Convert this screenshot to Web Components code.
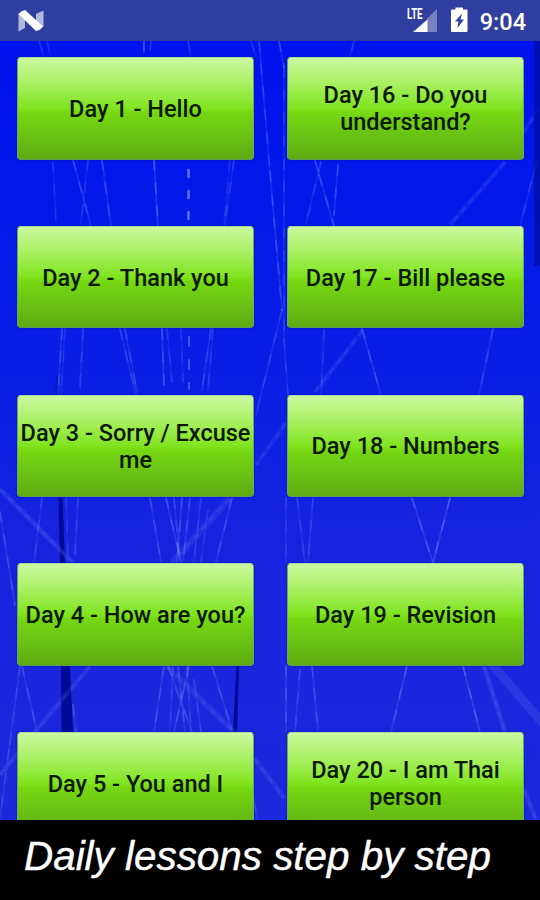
<!DOCTYPE html>
<html lang="en">
<head>
<meta charset="utf-8">
<title>Daily lessons</title>
<style>
  body {
    margin: 0;
    width: 540px;
    height: 900px;
    overflow: hidden;
    background: #000;
    font-family: Roboto, "Noto Sans", sans-serif;
  }
</style>
</head>
<body>
<lesson-app>
  <status-bar slot="status">9:04</status-bar>
  <lesson-button>Day 1 - Hello</lesson-button>
  <lesson-button>Day 16 - Do you understand?</lesson-button>
  <lesson-button>Day 2 - Thank you</lesson-button>
  <lesson-button>Day 17 - Bill please</lesson-button>
  <lesson-button>Day 3 - Sorry / Excuse me</lesson-button>
  <lesson-button>Day 18 - Numbers</lesson-button>
  <lesson-button>Day 4 - How are you?</lesson-button>
  <lesson-button>Day 19 - Revision</lesson-button>
  <lesson-button>Day 5 - You and I</lesson-button>
  <lesson-button>Day 20 - I am Thai person</lesson-button>
  <page-caption slot="caption">Daily lessons step by step</page-caption>
</lesson-app>

<script>
class StatusBar extends HTMLElement {
  constructor() {
    super();
    this.attachShadow({ mode: 'open' });
  }

  connectedCallback() {
    this.shadowRoot.innerHTML = `
      <style>
        :host {
          display: flex;
          align-items: center;
          height: 41px;
          box-sizing: border-box;
          padding: 0 14px 0 17px;
          background: #303f9f;
          color: #fff;
        }
        svg {
          display: block;
        }
        .spacer {
          flex: 1;
        }
        .signal {
          margin-right: 14px;
        }
        .battery {
          margin-right: 12px;
        }
        .time {
          font-size: 23.5px;
          font-weight: 500;
          line-height: 28px;
          padding-top: 3px;
        }
      </style>
      <svg width="28" height="41" viewBox="0 0 28 41">
        <path d="M1.500 13 8 18v10L1.500 31.500zM19 14l7.500-3.500V27L19 24z" fill="#b2b9dd"/>
        <path d="M1.500 14Q4 11 8 10L26 26.500Q23 30.500 19 31z" fill="#fff"/>
      </svg>
      <div class="spacer"></div>
      <svg class="signal" width="31" height="41" viewBox="406 0 31 41">
        <path d="M437 9v23h-10V18.500z" fill="#7781be"/>
        <path d="M427.500 19.500V32h-14.500z" fill="#fff"/>
        <text x="407" y="19" font-size="14.500" font-weight="700" textLength="15.500" lengthAdjust="spacingAndGlyphs" fill="#fff">LTE</text>
      </svg>
      <svg class="battery" width="17" height="41" viewBox="451 0 17 41">
        <path d="M451 10.500q0-1 1-1h3.500V7.500h7.500v2h3.500q1 0 1 1v20.500q0 1-1 1H452q-1 0-1-1z" fill="#fff"/>
        <path d="M462 13.500 455 21.500h3.500l-1 6.500 6.500-8.500h-3.500z" fill="#303f9f"/>
      </svg>
      <div class="time"><slot></slot></div>
    `;
  }
}

class StringBackdrop extends HTMLElement {
  constructor() {
    super();
    this.attachShadow({ mode: 'open' });
    // x1, y1, x2, y2, opacity
    this.threads = [
      [39, 41, 44, 57, .25], [47, 41, 50, 55, .2], [144, 41, 144, 52, .5], [151, 41, 150, 50, .3],
      [188, 41, 191, 57, .28], [251, 41, 256, 57, .25], [259, 41, 270, 172, .35],
      [279, 41, 284, 67, .4], [284, 67, 284, 340, .3], [354, 41, 350, 57, .3],
      [53, 162, 56, 222, .23], [73, 160, 91, 226, .38], [88, 160, 81, 224, .25],
      [102, 160, 111, 226, .4], [154, 160, 158, 226, .5], [230, 160, 224, 226, .22],
      [234, 160, 225, 224, .3], [270, 172, 282, 310, .4],
      [315, 160, 319, 175, .35], [321, 162, 306, 224, .3], [319, 175, 334, 226, .4],
      [338, 165, 334, 215, .38], [537, 160, 520, 226, .32],
      [62, 329, 58, 395, .38], [65, 329, 61, 395, .22], [83, 329, 80, 388, .3],
      [120, 329, 136, 395, .32], [125, 329, 137, 392, .35], [162, 329, 164, 385, .42],
      [167, 329, 172, 382, .25], [181, 329, 183, 382, .22],
      [211, 329, 202, 390, .32], [213, 329, 208, 390, .25], [282, 310, 256, 415, .3],
      [284, 340, 288, 395, .25], [324, 330, 321, 395, .24],
      [362, 329, 381, 395, .4], [493, 329, 479, 395, .32],
      [42, 498, 34, 563, .28], [0, 512, 15, 605, .35], [66, 498, 68, 555, .2],
      [78, 498, 75, 555, .3], [150, 498, 161, 562, .35], [166, 498, 181, 562, .4],
      [174, 498, 180, 562, .3], [182, 498, 177, 562, .4], [190, 498, 183, 562, .35],
      [201, 498, 194, 562, .25], [208, 510, 201, 562, .2],
      [232, 498, 216, 562, .36], [286, 498, 286, 563, .24],
      [297, 498, 305, 563, .26], [313, 498, 308, 563, .3],
      [412, 498, 433, 563, .45], [450, 498, 433, 563, .52],
      [20, 666, 9, 750, .3], [9, 750, 0, 818, .28], [22, 666, 37, 732, .34],
      [164, 666, 154, 732, .38], [168, 666, 192, 732, .35], [173, 666, 170, 732, .25],
      [189, 666, 174, 732, .4], [178, 666, 185, 732, .35], [187, 666, 191, 732, .26],
      [194, 680, 201, 732, .28], [212, 666, 232, 730, .38], [73, 705, 76, 732, .34],
      [286, 666, 286, 732, .38], [300, 670, 295, 732, .3], [312, 666, 318, 730, .35],
      [407, 666, 391, 732, .42], [463, 666, 480, 732, .48], [254, 800, 257, 819, .3]
    ];
    // wider, fainter bands of the same strings
    this.bands = [
      [505, 162, 450, 225, 5, .09], [363, 330, 315, 392, 5, .09],
      [286, 423, 256, 465, 5, .08], [0, 489, 73, 563, 5, .13],
      [230, 498, 172, 563, 7, .1], [90, 666, 35, 732, 5, .1],
      [35, 732, 0, 775, 5, .1], [167, 666, 238, 736, 6, .1],
      [254, 758, 284, 798, 5, .1], [484, 666, 505, 732, 5, .14],
      [490, 662, 545, 726, 9, .14], [524, 790, 536, 820, 5, .12],
      [539, 108, 522, 135, 5, .08]
    ];
  }

  connectedCallback() {
    const bands = this.bands.map(([x1, y1, x2, y2, w, o]) => `
      <line x1="${x1}" y1="${y1}" x2="${x2}" y2="${y2}" stroke-width="${w}" opacity="${o}"/>
      <line x1="${x1}" y1="${y1}" x2="${x2}" y2="${y2}" stroke-width="2" stroke-dasharray="7 5" opacity="${w > 8 ? 0 : .13}"/>
    `).join('');
    const threads = this.threads.map(([x1, y1, x2, y2, o]) => `
      <line x1="${x1}" y1="${y1}" x2="${x2}" y2="${y2}" stroke-width="1.8" opacity="${o * .38}"/>
      <line x1="${x1}" y1="${y1}" x2="${x2}" y2="${y2}" stroke-width="1.8" stroke-dasharray="10 13" opacity="${o * .5}"/>
    `).join('');

    this.shadowRoot.innerHTML = `
      <style>
        :host {
          display: block;
          background: linear-gradient(#0012ee, #0319e8 22%, #0a1fe4 45%, #1624df 65%, #1b29dc);
        }
        svg {
          display: block;
        }
      </style>
      <svg width="540" height="779" viewBox="0 41 540 779">
        <g fill="#000a94">
          <path d="M58.500 498h4L65 563h-5z"/>
          <path d="M61 666h9l3 67H61.500z"/>
          <path d="M236.500 666h2.500l-2 67h-4z"/>
          <path d="M56 375h3v20h-4z" opacity=".3"/>
        </g>
        <g stroke="#8fa0ff">${bands}</g>
        <g stroke="#98adff" stroke-linecap="round">
          ${threads}
          <path d="M188.500 162v64" stroke-width="2.600" stroke-dasharray="7 14" stroke-dashoffset="-8" opacity=".6"/>
          <path d="M189 329v60" stroke-width="2" stroke-dasharray="9 14" stroke-dashoffset="-8" opacity=".38"/>
        </g>
        <rect x="534" y="41" width="6" height="225" fill="#000e9e" opacity=".75"/>
      </svg>
    `;
  }
}

class LessonButton extends HTMLElement {
  constructor() {
    super();
    this.attachShadow({ mode: 'open' });
  }

  connectedCallback() {
    this.shadowRoot.innerHTML = `
      <style>
        :host {
          display: block;
          height: 102.5px;
        }
        button {
          display: flex;
          align-items: center;
          justify-content: center;
          width: 100%;
          height: 100%;
          box-sizing: border-box;
          margin: 0;
          padding: 2px 1px 0 1px;
          border: 1px solid;
          border-color: #a6dba0 #6aa86a #5b9a58 #6aa86a;
          border-radius: 4px;
          background: linear-gradient(#cbf8a0, #a9f062 25%, #80e41f 50%, #76d813 54%, #6bc414 75%, #5eaa12);
          box-shadow: 0 0 2px #0010a8;
          color: #0b1800;
          font: 500 23.5px/27px Roboto, "Noto Sans", sans-serif;
          text-align: center;
        }
      </style>
      <button type="button"><span><slot></slot></span></button>
    `;
  }
}

class PageCaption extends HTMLElement {
  constructor() {
    super();
    this.attachShadow({ mode: 'open' });
  }

  connectedCallback() {
    this.shadowRoot.innerHTML = `
      <style>
        :host {
          display: block;
          height: 80px;
          box-sizing: border-box;
          padding: 13px 0 0 24px;
          background: #000;
          color: #fff;
          font: italic 40.4px/46px "Liberation Sans", Arial, sans-serif;
          -webkit-text-stroke: .4px #fff;
          white-space: nowrap;
        }
      </style>
      <slot></slot>
    `;
  }
}

class LessonApp extends HTMLElement {
  constructor() {
    super();
    this.attachShadow({ mode: 'open' });
  }

  connectedCallback() {
    this.shadowRoot.innerHTML = `
      <style>
        :host {
          display: grid;
          grid-template-rows: 41px 779px 80px;
          width: 540px;
          height: 900px;
        }
        main {
          display: grid;
          overflow: hidden;
        }
        string-backdrop, .lessons {
          grid-area: 1 / 1;
          min-height: 0;
        }
        .lessons {
          display: grid;
          grid-template-columns: 237px 237px;
          grid-auto-rows: 102.5px;
          gap: 66.25px 33px;
          align-content: start;
          padding: 16px 16px 0 17px;
          height: 763px;
          overflow: hidden;
          z-index: 1;
        }
      </style>
      <slot name="status"></slot>
      <main>
        <string-backdrop></string-backdrop>
        <div class="lessons"><slot></slot></div>
      </main>
      <slot name="caption"></slot>
    `;
  }
}

customElements.define('status-bar', StatusBar);
customElements.define('string-backdrop', StringBackdrop);
customElements.define('lesson-button', LessonButton);
customElements.define('page-caption', PageCaption);
customElements.define('lesson-app', LessonApp);
</script>
</body>
</html>
